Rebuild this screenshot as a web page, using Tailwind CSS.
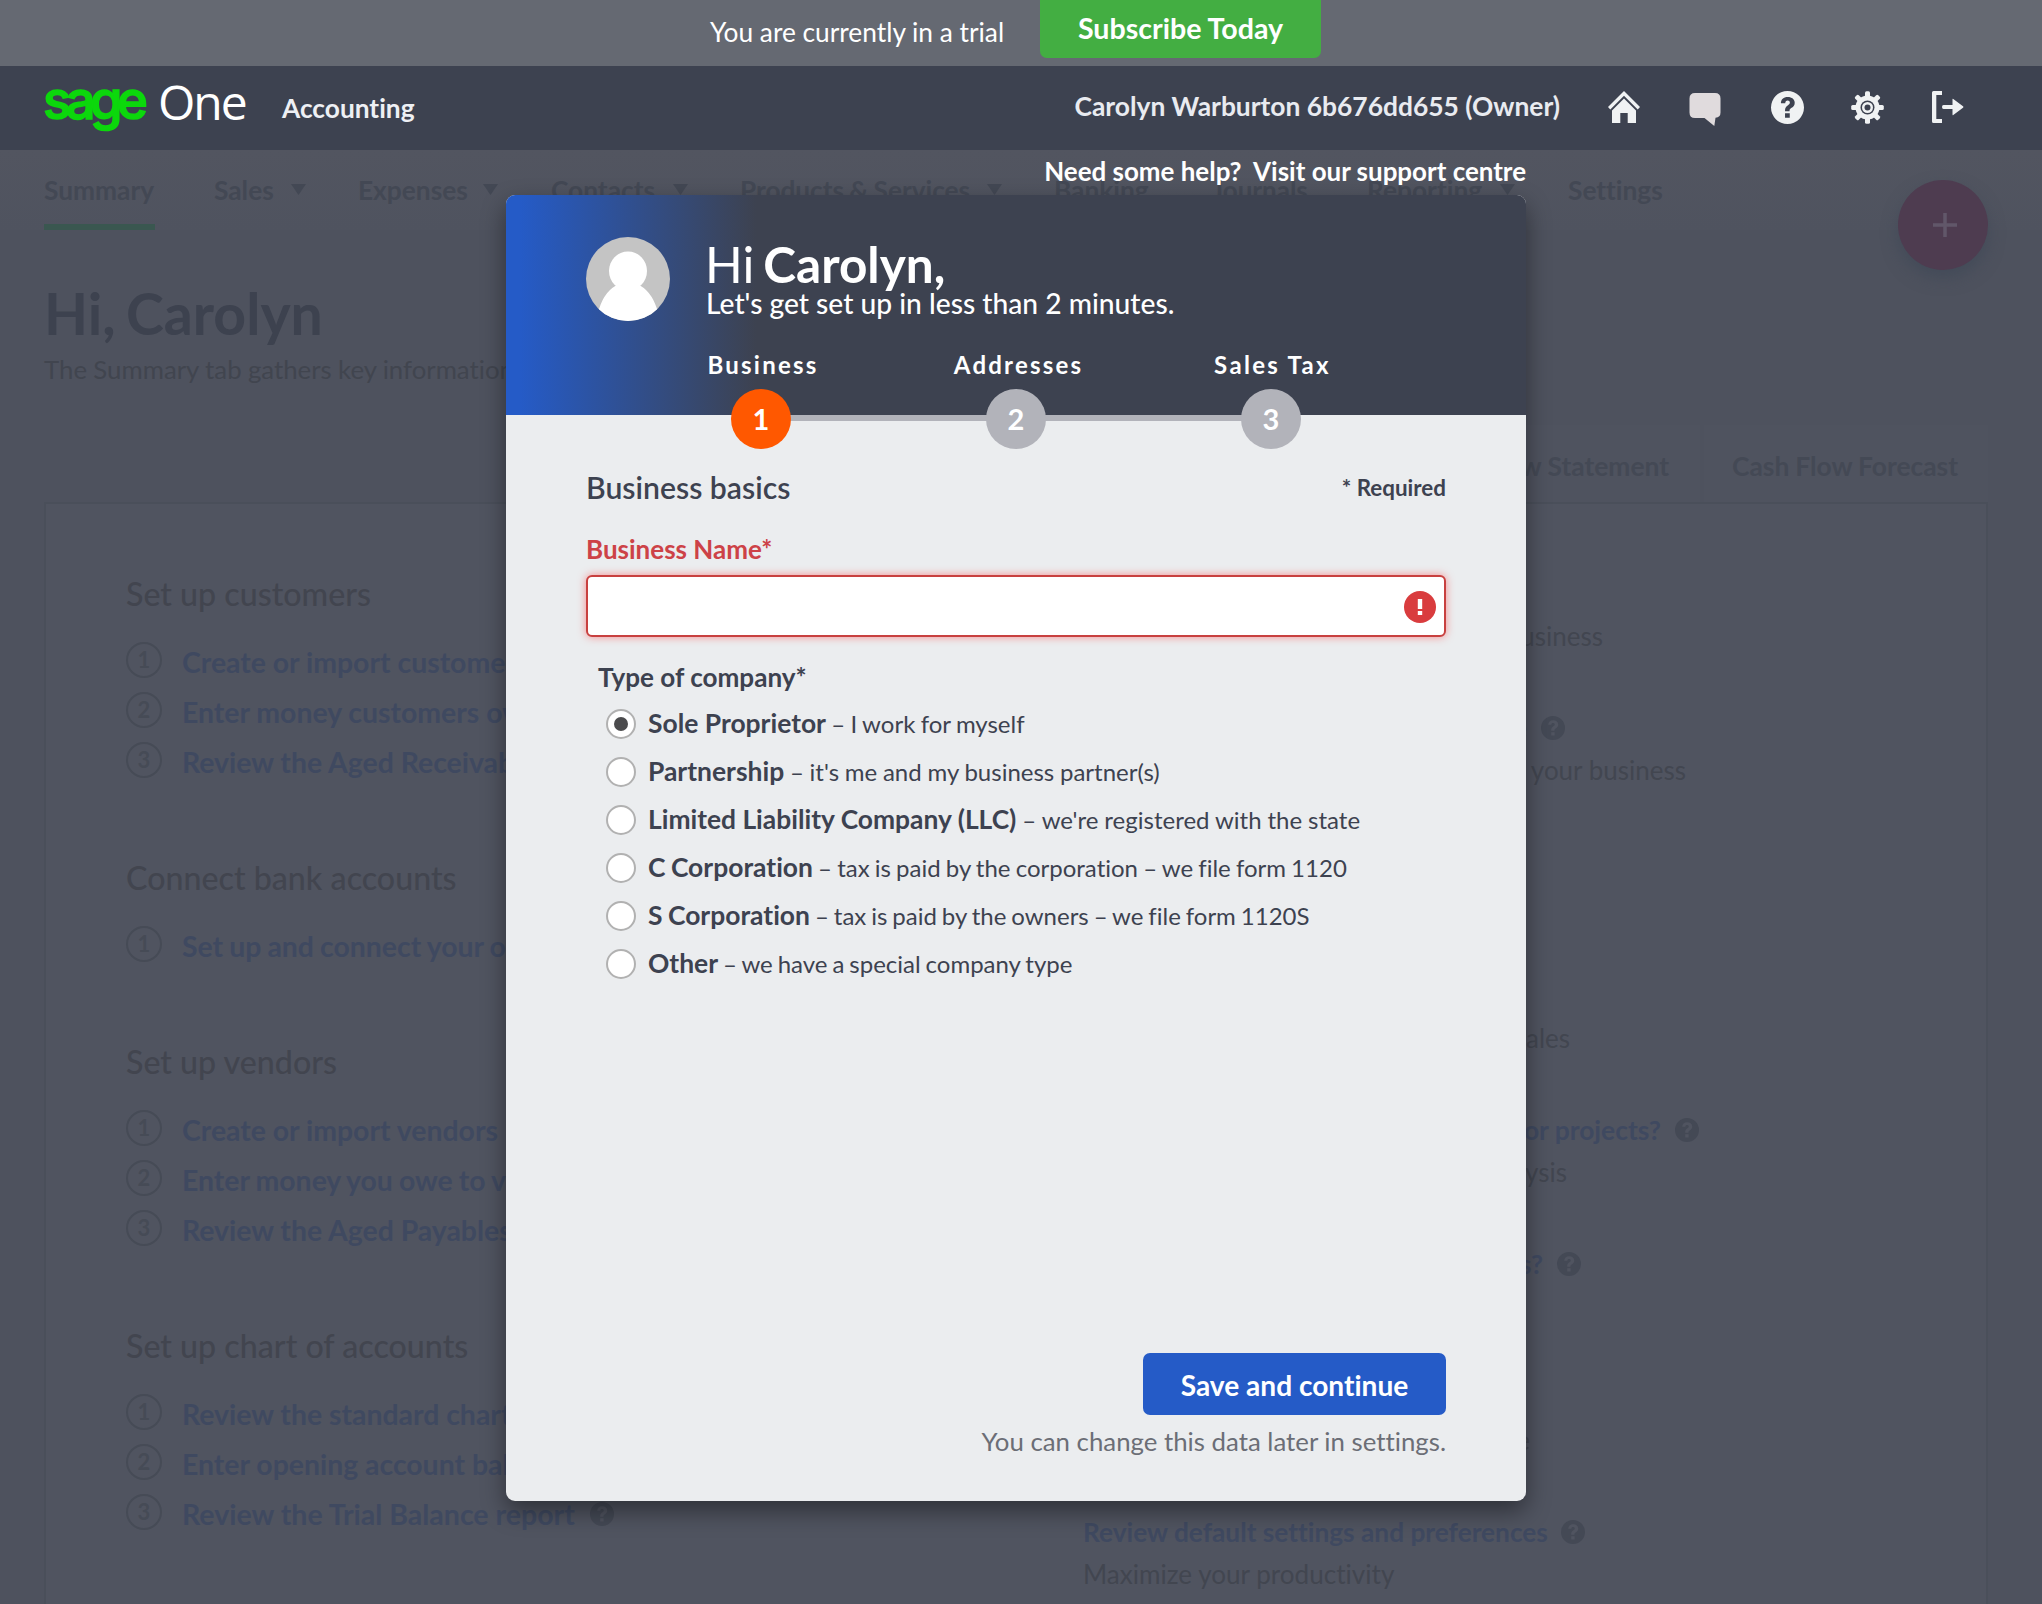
<!DOCTYPE html>
<html lang="en">
<head>
<meta charset="utf-8">
<title>Sage One Accounting</title>
<script src="https://cdn.jsdelivr.net/npm/@tailwindcss/browser@4"></script>
</head>
<body class="relative h-[1604px] w-[2042px] overflow-hidden bg-[#4e525e] font-[Lato,sans-serif] whitespace-nowrap [font-variant-ligatures:none]">

<svg class="hidden">
  <symbol id="help" viewBox="0 0 32 32">
    <path fill-rule="evenodd" d="M16 0a16 16 0 1 1 0 32a16 16 0 1 1 0-32zM13.6 21.6v4.4h4.6v-4.4zM9.6 11.8h4.2c.1-1.6.9-2.5 2.3-2.5c1.300 0 2.200.8 2.200 1.900c0 1.100-.6 1.700-1.800 2.500c-2 1.300-2.900 2.600-2.900 5.100v.9h4.400v-.7c0-1.100.5-1.700 2-2.700c1.900-1.200 3-2.700 3-5c0-3.400-2.700-5.600-6.800-5.600c-4.100 0-6.600 2.400-6.600 6.100z"/>
  </symbol>
</svg>

<!-- Trial banner -->
<div class="flex h-[66px] items-start bg-[#656972] pl-[710px]">
  <span class="mt-4 w-[330px] text-[26.3px] leading-8 text-white">You are currently in a trial</span>
  <button class="h-[58px] w-[281px] rounded-b-[7px] bg-[#43ae42] pb-1 text-[28.6px] leading-[56px] font-bold text-white">Subscribe Today</button>
</div>

<!-- App header -->
<header class="flex h-[84px] items-center bg-[#3d4250] pr-[78px] pl-[43px]">
  <div class="flex w-[239px] items-center pb-[13px]">
    <span class="w-[115px] pb-[3px] font-[Inter] text-[52.5px] leading-[54px] font-medium tracking-[-5.5px] text-[#0cd80c] [-webkit-text-stroke:1.6px_#0cd80c] [stroke-linejoin:round]">sage</span>
    <span class="font-['Open_Sans'] text-[48px] leading-[56px] font-normal tracking-[-2px] text-white">One</span>
  </div>
  <span class="pt-[2px] text-[26.3px] font-bold text-[#eef0f4]">Accounting</span>
  <span class="mr-[48px] ml-auto pb-[2px] text-[26.4px] font-bold text-[#e9ebf0]">Carolyn Warburton 6b676dd655 (Owner)</span>
  <div class="flex items-center pb-[2px] text-[#f0f2f3]">
    <svg class="mr-[49px] h-8 w-8" viewBox="0 0 32 32" fill="currentColor"><path d="M16 0L32 16l-2.300 2.500L16 4.800L2.300 18.500L0 16z"/><path d="M16 7.500l12 12V32h-8.300V22h-7.400v10H4V19.500z"/></svg>
    <svg class="mt-[5px] mr-[50px] h-[33px] w-8" viewBox="0 0 32 33" fill="#e0dbdd"><path d="M6 0h20q5.500 0 5.500 5.500v14q0 5-5 5.200L25.300 33L15.500 25H6Q.5 25 .5 19.500v-14Q.5 0 6 0z"/></svg>
    <svg class="mr-[47px] h-[33px] w-[33px]" fill="currentColor"><use href="#help"/></svg>
    <svg class="mr-[48px] h-[33px] w-[33px]" viewBox="-16.500 -16.500 33 33" fill="currentColor">
      <g><rect x="-2.500" y="-16.300" width="5" height="32.600" rx="1.500"/><rect x="-2.500" y="-16.300" width="5" height="32.600" rx="1.500" transform="rotate(45)"/><rect x="-2.500" y="-16.300" width="5" height="32.600" rx="1.500" transform="rotate(90)"/><rect x="-2.500" y="-16.300" width="5" height="32.600" rx="1.500" transform="rotate(135)"/></g>
      <circle r="12"/><circle r="7" fill="#3d4250"/><circle r="5.500"/><circle r="3" fill="#3d4250"/>
    </svg>
    <svg class="h-8 w-8" viewBox="0 0 32 32" fill="currentColor"><path d="M1.500 0H10v4H4.300v24H10v4H1.500Q0 32 0 30.500v-29Q0 0 1.500 0z"/><path d="M11.500 14h9V8.300q0-1 .8-.3L31 15.200q1 .8 0 1.600l-9.700 7.200q-.8.600-.8-.4V18h-9q-1.500 0-1.500-2t1.500-2z"/></svg>
  </div>
</header>

<!-- Main navigation -->
<nav class="flex h-20 bg-gradient-to-b from-[#525560] to-[#4f535f] pl-[44px] text-[26.3px] leading-8 font-bold text-[#434854]">
  <div class="w-[170px]"><div class="h-20 w-[111px] border-b-[6px] border-[#3a5750] pt-6">Summary</div></div>
  <div class="flex w-[144px] pt-6">Sales<svg class="mt-[10px] ml-[17px] h-[11px] w-[15px]" fill="currentColor"><path d="M0 0h15L7.500 11z"/></svg></div>
  <div class="flex w-[193px] pt-6">Expenses<svg class="mt-[10px] ml-[15px] h-[11px] w-[15px]" fill="currentColor"><path d="M0 0h15L7.500 11z"/></svg></div>
  <div class="flex w-[189px] pt-6">Contacts<svg class="mt-[10px] ml-[18px] h-[11px] w-[15px]" fill="currentColor"><path d="M0 0h15L7.500 11z"/></svg></div>
  <div class="flex w-[314px] pt-6"><span class="text-[26.2px] [word-spacing:-1px]">Products &amp; Services</span><svg class="mt-[10px] ml-[17px] h-[11px] w-[15px]" fill="currentColor"><path d="M0 0h15L7.500 11z"/></svg></div>
  <div class="w-[158px] pt-6">Banking</div>
  <div class="w-[155px] pt-6 text-[26px]">Journals</div>
  <div class="flex w-[201px] pt-6">Reporting<svg class="mt-[10px] ml-[18px] h-[11px] w-[15px]" fill="currentColor"><path d="M0 0h15L7.500 11z"/></svg></div>
  <div class="pt-6">Settings</div>
</nav>

<!-- Quick-add button -->
<div class="absolute top-[180px] left-[1898px] flex h-[90px] w-[90px] items-center justify-center rounded-full bg-[#4e3c50] pl-1 shadow-[0_8px_16px_rgba(60,70,85,0.6)]">
  <svg class="h-6 w-6" viewBox="0 0 24 24" stroke="#615769" stroke-width="3.500"><path d="M12 0v24M0 12h24"/></svg>
</div>

<!-- Page title -->
<div class="mt-[53px] pl-[44px]">
  <h1 class="text-[57.2px] leading-[60px] font-bold text-[#3d424f] [word-spacing:-3.500px]">Hi, Carolyn</h1>
  <p class="mt-[10px] text-[25.8px] leading-8 text-[#41454f] [word-spacing:-0.3px]">The Summary tab gathers key information about your business</p>
</div>

<!-- Report tabs -->
<div class="mt-10 flex h-[77px] justify-end gap-1 pr-[54px] text-[26.4px] leading-[82px] font-bold text-[#444955]">
  <div class="bg-[#4f535f] px-[31px]">Cash Flow Statement</div>
  <div class="w-[284px] bg-[#4f535f] pl-[28px] [word-spacing:-0.5px]">Cash Flow Forecast</div>
</div>

<!-- Getting started panel -->
<main class="mr-[54px] ml-[44px] flex h-[1110px] border-2 border-[#4a4f5a] bg-[#505460]">
  <div class="flex w-[957px] flex-none flex-col gap-[73px] pt-[70px] pl-20 text-[28.4px] font-bold text-[#3f4960]">
    <section>
      <h2 class="mb-[21px] text-[32.2px] leading-10 font-medium text-[#42454f]">Set up customers</h2>
      <div class="flex h-[50px] items-center"><span class="mr-5 flex h-9 w-9 items-center justify-center rounded-full border-2 border-[#464b56] text-[22px] leading-none text-[#464b56]">1</span><span class="pt-[4px]">Create or import customers</span></div>
      <div class="flex h-[50px] items-center"><span class="mr-5 flex h-9 w-9 items-center justify-center rounded-full border-2 border-[#464b56] text-[22px] leading-none text-[#464b56]">2</span><span class="pt-[4px]">Enter money customers owe you</span></div>
      <div class="flex h-[50px] items-center"><span class="mr-5 flex h-9 w-9 items-center justify-center rounded-full border-2 border-[#464b56] text-[22px] leading-none text-[#464b56]">3</span><span class="pt-[4px]">Review the Aged Receivables report</span></div>
    </section>
    <section>
      <h2 class="mb-[21px] text-[32.2px] leading-10 font-medium text-[#42454f]">Connect bank accounts</h2>
      <div class="flex h-[50px] items-center"><span class="mr-5 flex h-9 w-9 items-center justify-center rounded-full border-2 border-[#464b56] text-[22px] leading-none text-[#464b56]">1</span><span class="pt-[4px] [word-spacing:-0.8px]">Set up and connect your opening balances</span></div>
    </section>
    <section>
      <h2 class="mb-[21px] text-[32.2px] leading-10 font-medium text-[#42454f]">Set up vendors</h2>
      <div class="flex h-[50px] items-center"><span class="mr-5 flex h-9 w-9 items-center justify-center rounded-full border-2 border-[#464b56] text-[22px] leading-none text-[#464b56]">1</span><span class="pt-[4px]">Create or import vendors</span></div>
      <div class="flex h-[50px] items-center"><span class="mr-5 flex h-9 w-9 items-center justify-center rounded-full border-2 border-[#464b56] text-[22px] leading-none text-[#464b56]">2</span><span class="pt-[4px] [word-spacing:-0.8px]">Enter money you owe to vendors</span></div>
      <div class="flex h-[50px] items-center"><span class="mr-5 flex h-9 w-9 items-center justify-center rounded-full border-2 border-[#464b56] text-[22px] leading-none text-[#464b56]">3</span><span class="pt-[4px]">Review the Aged Payables report</span></div>
    </section>
    <section>
      <h2 class="mb-[21px] text-[32.2px] leading-10 font-medium text-[#42454f]">Set up chart of accounts</h2>
      <div class="flex h-[50px] items-center"><span class="mr-5 flex h-9 w-9 items-center justify-center rounded-full border-2 border-[#464b56] text-[22px] leading-none text-[#464b56]">1</span><span class="pt-[4px]">Review the standard chart of accounts</span></div>
      <div class="flex h-[50px] items-center"><span class="mr-5 flex h-9 w-9 items-center justify-center rounded-full border-2 border-[#464b56] text-[22px] leading-none text-[#464b56]">2</span><span class="pt-[4px]">Enter opening account balances</span></div>
      <div class="flex h-[50px] items-center"><span class="mr-5 flex h-9 w-9 items-center justify-center rounded-full border-2 border-[#464b56] text-[22px] leading-none text-[#464b56]">3</span><span class="pt-[4px] text-[28.5px]">Review the Trial Balance report</span><svg class="mt-1 ml-[15px] h-6 w-6" fill="#444955"><use href="#help"/></svg></div>
    </section>
  </div>

  <div class="flex flex-col gap-[50px] pt-[69px] pl-20 text-[26px] leading-[42px] text-[#424650]">
    <div>
      <div class="font-bold text-[#3f4960]">Create a sales invoice</div>
      <div class="w-[520px] text-right">Bill the customers of your business</div>
    </div>
    <div>
      <div class="flex w-[482px] items-center justify-end gap-[14px] font-bold text-[#3f4960]">Create a quote or estimate<svg class="h-6 w-6" fill="#444955"><use href="#help"/></svg></div>
      <div class="w-[603px] text-right">Win more work for your business</div>
    </div>
    <div>
      <div class="font-bold text-[#3f4960]">Record your expenses</div>
      <div>Keep track of costs</div>
    </div>
    <div>
      <div class="font-bold text-[#3f4960]">Create products and services</div>
      <div class="w-[487px] text-right">Set prices to speed up your sales</div>
    </div>
    <div>
      <div class="flex w-[616px] items-center justify-end gap-[14px] text-[26.4px] font-bold text-[#3f4960]">Track departments or projects?<svg class="h-6 w-6" fill="#444955"><use href="#help"/></svg></div>
      <div class="w-[484px] text-right">Use categories for your analysis</div>
    </div>
    <div>
      <div class="flex w-[498px] items-center justify-end gap-[14px] font-bold text-[#3f4960]">Do you add users?<svg class="h-6 w-6" fill="#444955"><use href="#help"/></svg></div>
      <div>Invite your accountant</div>
    </div>
    <div>
      <div class="font-bold text-[#3f4960]">Customize your invoices</div>
      <div class="w-[447px] text-right">Match your company style</div>
    </div>
    <div>
      <div class="flex items-center gap-[13px] text-[26.25px] font-bold text-[#3f4960]">Review default settings and preferences<svg class="h-6 w-6" fill="#444955"><use href="#help"/></svg></div>
      <div class="text-[26.1px]">Maximize your productivity</div>
    </div>
  </div>
</main>

<!-- Setup dialog -->
<div class="absolute top-[150px] left-[506px] w-[1020px]">
  <p class="h-[45px] text-right text-[25.95px] leading-[42px] font-bold text-white">Need some help?&nbsp; Visit our support centre</p>
  <div class="flex h-[1306px] flex-col rounded-[9px] bg-[#ebedef] text-[#3d4250] shadow-[0_10px_24px_rgba(0,0,0,0.42)]">
    <div class="h-[220px] rounded-t-[9px] bg-[#3d4250] bg-[linear-gradient(90deg,#255bc7_0px,#255bc7_14px,#3d4250_250px)] pt-[42px] text-white">
      <div class="flex h-28 pl-20">
        <svg class="mr-9 h-[84px] w-[84px] rounded-full" viewBox="0 0 84 84"><rect width="84" height="84" fill="#c4c4c4"/><ellipse cx="42" cy="34" rx="19" ry="19.500" fill="#fff"/><path d="M33 47q9 8 18 0q14 6 20 25V84H13V72q6-19 20-25z" fill="#fff"/></svg>
        <div class="pt-[2px]">
          <div class="text-[49.5px] leading-[50px]"><span class="-ml-px font-normal">Hi</span><span class="ml-[9px] font-bold">Carolyn,</span></div>
          <div class="-mt-px text-[28.2px] leading-[30px] font-medium">Let's get set up in less than 2 minutes.</div>
        </div>
      </div>
      <div class="relative mx-auto grid w-[765px] grid-cols-3 justify-items-center gap-y-[10px] text-[24px] leading-[30px] font-bold tracking-[2.2px]">
        <div class="absolute top-[66px] left-[127px] h-[6px] w-[510px] bg-[#b2b3ba]"></div>
        <span class="-mb-px pt-px pl-[4px]">Business</span><span class="-mb-px pt-px pl-[5px]">Addresses</span><span class="-mb-px pt-px pl-[3px] tracking-[2.300px]">Sales Tax</span>
        <span class="relative h-[60px] w-[60px] rounded-full bg-[#ff5800] text-center text-[29px] leading-[60px] tracking-normal">1</span>
        <span class="relative h-[60px] w-[60px] rounded-full bg-[#b2b3ba] text-center text-[29px] leading-[60px] tracking-normal">2</span>
        <span class="relative h-[60px] w-[60px] rounded-full bg-[#b2b3ba] text-center text-[29px] leading-[60px] tracking-normal">3</span>
      </div>
    </div>

    <form class="flex flex-1 flex-col px-20 pt-[51px] pb-11">
      <div class="flex items-center justify-between leading-10"><h2 class="text-[30.2px] font-semibold">Business basics</h2><span class="pt-[2px] text-[22.4px] font-bold">* Required</span></div>
      <label class="mt-[25px] text-[26px] leading-8 font-bold text-[#cd4247]">Business Name*</label>
      <div class="mt-[10px] flex h-[62px] items-center justify-end rounded-[6px] border-2 border-[#c8403f] bg-white pr-2 shadow-[0_0_8px_rgba(255,60,60,0.55)]">
        <svg class="mt-[2px] h-8 w-8" viewBox="0 0 32 32"><circle cx="16" cy="16" r="16" fill="#d93c3e"/><path d="M13.800 8h4.400v10h-4.400zM13.800 20h4.400v4h-4.400z" fill="#fff"/></svg>
      </div>
      <div class="mt-6 mb-[7px] ml-3 text-[26.1px] leading-8 font-bold">Type of company*</div>
      <div class="flex flex-col pl-5 text-[24px]">
        <label class="flex h-12 items-center gap-3"><span class="flex h-[30px] w-[30px] items-center justify-center rounded-full border-2 border-[#b1b1b1] bg-white"><span class="h-[14px] w-[14px] rounded-full bg-[#4b4b4d]"></span></span><span class="pb-px"><b class="text-[26.45px]">Sole Proprietor</b><span class="[word-spacing:-0.800px]"> – I work for myself</span></span></label>
        <label class="flex h-12 items-center gap-3"><span class="h-[30px] w-[30px] rounded-full border-2 border-[#b1b1b1] bg-white"></span><span class="pb-px"><b class="text-[26.45px]">Partnership</b><span class="[word-spacing:-0.400px]"> – it's me and my business partner(s)</span></span></label>
        <label class="flex h-12 items-center gap-3"><span class="h-[30px] w-[30px] rounded-full border-2 border-[#b1b1b1] bg-white"></span><span class="pb-px"><b class="text-[26.4px]">Limited Liability Company (LLC)</b><span class="[word-spacing:-0.2px]"> – we're registered with the state</span></span></label>
        <label class="flex h-12 items-center gap-3"><span class="h-[30px] w-[30px] rounded-full border-2 border-[#b1b1b1] bg-white"></span><span class="pb-px"><b class="text-[26.45px] [word-spacing:-1px]">C Corporation</b><span class="[word-spacing:-1px]"> – tax is paid by the corporation – we file form 1120</span></span></label>
        <label class="flex h-12 items-center gap-3"><span class="h-[30px] w-[30px] rounded-full border-2 border-[#b1b1b1] bg-white"></span><span class="pb-px"><b class="text-[26.45px] [word-spacing:-1px]">S Corporation</b><span class="[word-spacing:-1.200px]"> – tax is paid by the owners – we file form 1120S</span></span></label>
        <label class="flex h-12 items-center gap-3"><span class="h-[30px] w-[30px] rounded-full border-2 border-[#b1b1b1] bg-white"></span><span class="pb-px"><b class="text-[26.45px]">Other</b><span class="[word-spacing:-1.200px]"> – we have a special company type</span></span></label>
      </div>
      <div class="mt-auto flex flex-col items-end">
        <button type="button" class="h-[62px] w-[303px] rounded-[7px] bg-[#255bc7] pt-[2px] text-[28.1px] leading-[60px] font-bold text-white">Save and continue</button>
        <p class="mt-[10px] text-[25.8px] leading-8 text-[#6b6e76]">You can change this data later in settings.</p>
      </div>
    </form>
  </div>
</div>
</body>
</html>
